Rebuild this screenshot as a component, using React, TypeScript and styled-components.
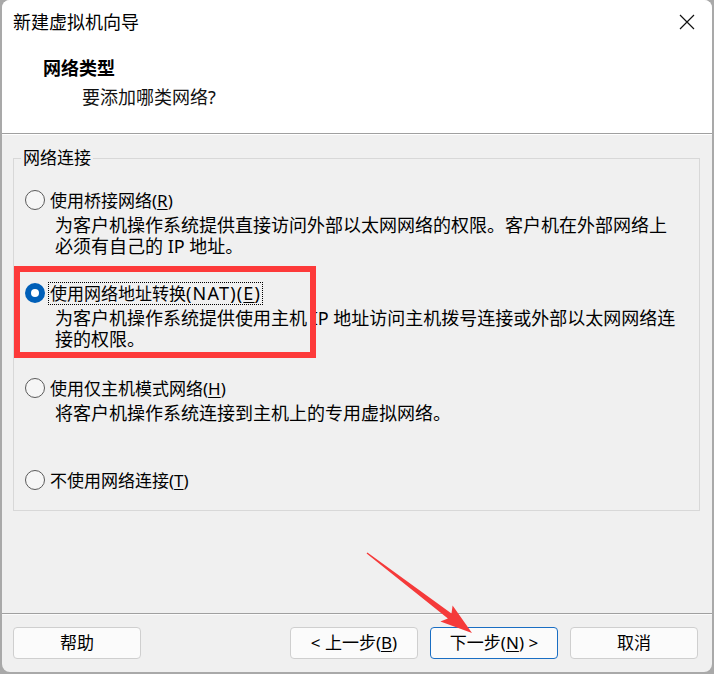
import React from "react";
import styled, { createGlobalStyle } from "styled-components";

const Global = createGlobalStyle`
  html, body { margin: 0; padding: 0; background: #a9a9a9; }
  body { width: 714px; height: 674px; overflow: hidden; }
  * { box-sizing: border-box; }
`;

const FONT = `"Noto Sans", "Noto Sans CJK SC", sans-serif`;

const Window = styled.div`
  position: relative;
  width: 710px;
  height: 672px;
  margin: 0 2px;
  border-radius: 8px;
  overflow: hidden;
  background: #f0f0f0;
  display: flex;
  flex-direction: column;
  font-family: ${FONT};
  color: #000;
`;

const Header = styled.div`
  height: 134px;
  background: #fff;
  display: flex;
  flex-direction: column;
  border-bottom: 1px solid #a0a0a0;
  flex-shrink: 0;
`;

const TitleBar = styled.div`
  height: 44px;
  display: flex;
  align-items: center;
  justify-content: space-between;
  padding: 0 17px 0 11px;
`;

const TitleText = styled.div`
  font-size: 18px;
  line-height: 24px;
`;

const CloseBtn = styled.div`
  width: 16px;
  height: 16px;
  display: flex;
  align-items: center;
  justify-content: center;
`;

const PageTitle = styled.div`
  margin-top: 12px;
  padding-left: 41px;
  font-size: 18px;
  font-weight: 700;
  line-height: 24px;
`;

const PageSubtitle = styled.div`
  margin-top: 5px;
  padding-left: 80px;
  font-size: 18px;
  line-height: 24px;
  color: #111;
`;

const Body = styled.div`
  flex: 1;
  padding: 14px 12px 0 11px;
  box-shadow: inset 0 1px 0 #fff;
`;

const Group = styled.fieldset`
  margin: 0;
  padding: 21px 0 19px 0;
  border: 1px solid #d8d8d8;
  display: flex;
  flex-direction: column;
`;

const Legend = styled.legend`
  margin-left: 7px;
  padding: 0 2px;
  font-size: 17px;
  line-height: 20px;
`;

const Option = styled.div<{ $gap: number }>`
  margin-top: ${(p) => p.$gap}px;
  display: flex;
  flex-direction: column;
`;

const OptionRow = styled.div`
  display: flex;
  align-items: center;
  height: 22px;
  padding-left: 11px;
  gap: 6px;
`;

const Radio = styled.span<{ $checked?: boolean }>`
  width: 20px;
  height: 20px;
  border-radius: 50%;
  flex-shrink: 0;
  display: flex;
  align-items: center;
  justify-content: center;
  background: ${(p) => (p.$checked ? "#005fb8" : "#f6f6f6")};
  border: ${(p) => (p.$checked ? "none" : "1.5px solid #5a5a5a")};
  &::after {
    content: "";
    display: ${(p) => (p.$checked ? "block" : "none")};
    width: 8px;
    height: 8px;
    border-radius: 50%;
    background: #fff;
  }
`;

const Label = styled.span<{ $focus?: boolean }>`
  font-size: 17px;
  line-height: 21px;
  white-space: nowrap;
  padding: 0 1px;
  margin-left: -2px;
  outline: ${(p) => (p.$focus ? "1px dotted #000" : "none")};
`;

const Latin = styled.span`
  font-size: 18px;
  letter-spacing: 1.2px;
`;

const Key = styled.span`
  text-decoration: underline;
  text-underline-offset: 2px;
`;

const Desc = styled.div`
  margin-top: 4px;
  padding-left: 41px;
  font-size: 18px;
  line-height: 21px;
  white-space: nowrap;
`;

const Footer = styled.div`
  flex-shrink: 0;
  height: 59px;
  border-top: 1px solid #a0a0a0;
  box-shadow: inset 0 1px 0 #fbfbfb;
  display: flex;
  align-items: flex-start;
  padding: 13px 14px 0 11px;
  gap: 12px;
`;

const Spacer = styled.div`
  flex: 1;
`;

const Button = styled.button<{ $primary?: boolean }>`
  width: 128px;
  height: 32px;
  border-radius: 4px;
  border: 1px solid ${(p) => (p.$primary ? "#1a6ec3" : "#cfcfcf")};
  background: #fbfbfb;
  font-family: ${FONT};
  font-size: 17px;
  color: #000;
  padding: 0;
  display: flex;
  align-items: center;
  justify-content: center;
  line-height: 20px;
`;

const Highlight = styled.div`
  position: absolute;
  left: 12px;
  top: 266px;
  width: 302px;
  height: 92px;
  border: 6px solid #fd3a3a;
  pointer-events: none;
`;

const ArrowLayer = styled.svg`
  position: absolute;
  left: 0;
  top: 0;
  width: 710px;
  height: 672px;
  pointer-events: none;
`;

export default function App() {
  return (
    <>
      <Global />
      <Window>
        <Header>
          <TitleBar>
            <TitleText>新建虚拟机向导</TitleText>
            <CloseBtn>
              <svg width="16" height="16" viewBox="0 0 16 16">
                <path d="M1 1 L15 15 M15 1 L1 15" stroke="#111" strokeWidth="1.2" fill="none" />
              </svg>
            </CloseBtn>
          </TitleBar>
          <PageTitle>网络类型</PageTitle>
          <PageSubtitle>要添加哪类网络?</PageSubtitle>
        </Header>
        <Body>
          <Group>
            <Legend>网络连接</Legend>
            <Option $gap={0}>
              <OptionRow>
                <Radio />
                <Label>
                  使用桥接网络(<Key>R</Key>)
                </Label>
              </OptionRow>
              <Desc>
                为客户机操作系统提供直接访问外部以太网网络的权限。客户机在外部网络上
                <br />
                必须有自己的 IP 地址。
              </Desc>
            </Option>
            <Option $gap={25}>
              <OptionRow>
                <Radio $checked />
                <Label $focus>
                  使用网络地址转换<Latin>(NAT)(<Key>E</Key>)</Latin>
                </Label>
              </OptionRow>
              <Desc>
                为客户机操作系统提供使用主机 IP 地址访问主机拨号连接或外部以太网网络连
                <br />
                接的权限。
              </Desc>
            </Option>
            <Option $gap={27}>
              <OptionRow>
                <Radio />
                <Label>
                  使用仅主机模式网络(<Key>H</Key>)
                </Label>
              </OptionRow>
              <Desc>将客户机操作系统连接到主机上的专用虚拟网络。</Desc>
            </Option>
            <Option $gap={45}>
              <OptionRow>
                <Radio />
                <Label>
                  不使用网络连接(<Key>T</Key>)
                </Label>
              </OptionRow>
            </Option>
          </Group>
        </Body>
        <Footer>
          <Button>帮助</Button>
          <Spacer />
          <Button>
            &lt; 上一步(<Key>B</Key>)
          </Button>
          <Button $primary>
            下一步(<Key>N</Key>) &gt;
          </Button>
          <Button>取消</Button>
        </Footer>
        <Highlight />
        <ArrowLayer viewBox="0 0 710 672">
          <polygon
            points="364.6,553.6 445.9,618.4 438.4,621.5 470,633 450.6,605.6 449.5,613.6 365.4,552.4"
            fill="#f53a3a"
          />
        </ArrowLayer>
      </Window>
    </>
  );
}
